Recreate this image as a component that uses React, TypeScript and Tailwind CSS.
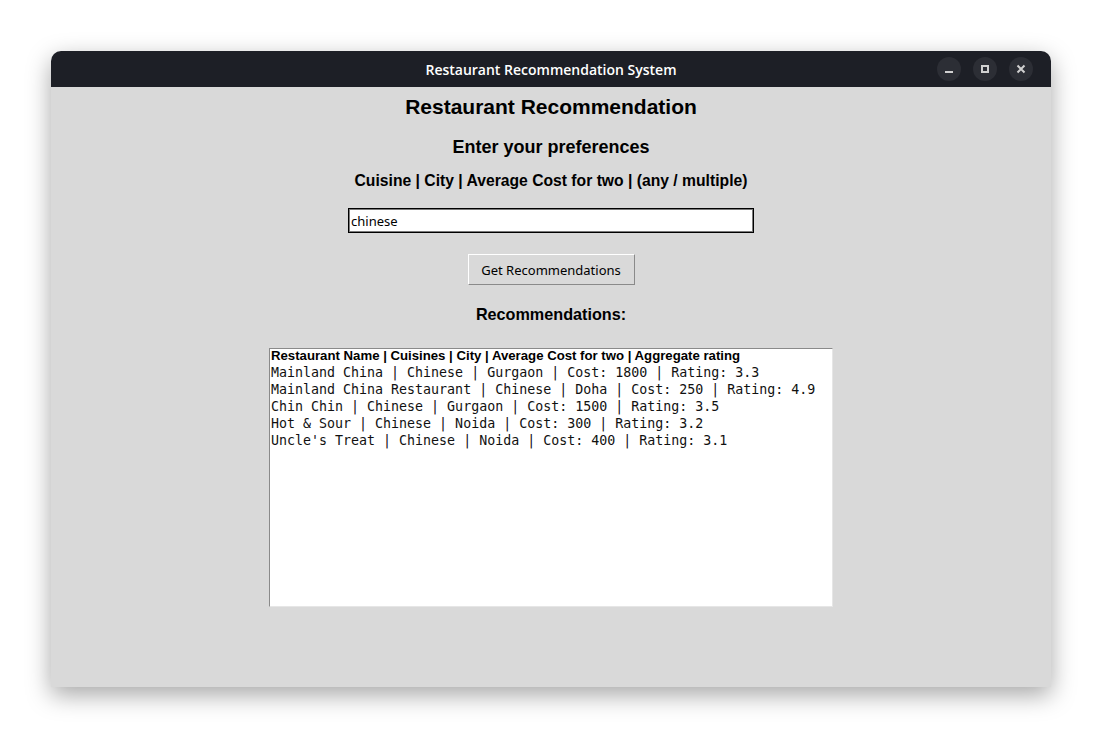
import React from "react";

const rows = [
  "Mainland China | Chinese | Gurgaon | Cost: 1800 | Rating: 3.3",
  "Mainland China Restaurant | Chinese | Doha | Cost: 250 | Rating: 4.9",
  "Chin Chin | Chinese | Gurgaon | Cost: 1500 | Rating: 3.5",
  "Hot & Sour | Chinese | Noida | Cost: 300 | Rating: 3.2",
  "Uncle's Treat | Chinese | Noida | Cost: 400 | Rating: 3.1",
];

export default function App() {
  return (
    <div className="w-[1102px] h-[738px] bg-white pt-[51px] pl-[51px]">
      <div className="w-[1000px] h-[636px] flex flex-col rounded-t-[10px] overflow-hidden shadow-[0_8px_24px_rgba(0,0,0,0.35)]">
        <div className="h-[36px] bg-[#1d1f26] flex items-center relative shrink-0">
          <div className="flex-1 text-center text-white text-[14px] font-semibold [font-family:'Open_Sans',sans-serif]">
            Restaurant Recommendation System
          </div>
          <div className="absolute right-[18px] top-[6px] flex gap-[12px]">
            <div className="w-[24px] h-[24px] rounded-full bg-[#2c2e35] flex items-center justify-center">
              <div className="w-[8px] h-[2px] bg-[#d0d0d0] mt-[5px]" />
            </div>
            <div className="w-[24px] h-[24px] rounded-full bg-[#2c2e35] flex items-center justify-center">
              <div className="w-[8px] h-[8px] border-[2px] border-[#d0d0d0]" />
            </div>
            <div className="w-[24px] h-[24px] rounded-full bg-[#2c2e35] flex items-center justify-center">
              <svg width="10" height="10" viewBox="0 0 10 10">
                <path d="M1.5 1.5 L8.5 8.5 M8.5 1.5 L1.5 8.5" stroke="#d0d0d0" strokeWidth="2" />
              </svg>
            </div>
          </div>
        </div>
        <div className="flex-1 bg-[#d9d9d9] flex flex-col items-center pt-[8px] text-black [font-family:'Liberation_Sans',Arial,sans-serif]">
          <div className="text-[21px] leading-[24px] font-bold">Restaurant Recommendation</div>
          <div className="mt-[18px] text-[18px] leading-[21px] font-bold">Enter your preferences</div>
          <div className="mt-[13px] text-[15.7px] leading-[19px] font-bold">
            Cuisine | City | Average Cost for two | (any / multiple)
          </div>
          <div className="mt-[18px] w-[406px] h-[25px] bg-white border border-black outline outline-1 outline-[#7a7a7a] -outline-offset-2 flex items-center pl-[2px] pt-[2px] text-[13px] [font-family:'Noto_Sans',sans-serif]">
            chinese
          </div>
          <div className="mt-[21px] w-[167px] h-[31px] bg-[#d9d9d9] border border-t-white border-l-white border-r-[#8a8a8a] border-b-[#8a8a8a] flex items-center justify-center pt-[2px] text-[13px] [font-family:'Noto_Sans',sans-serif]">
            Get Recommendations
          </div>
          <div className="mt-[19px] text-[16.2px] leading-[21px] font-bold">Recommendations:</div>
          <div className="mt-[23px] w-[564px] h-[259px] bg-white border border-t-[#8a8a8a] border-l-[#8a8a8a] border-r-[#e6e6e6] border-b-[#e6e6e6] pl-[1px]">
            <div className="text-[13.2px] leading-[14px] font-bold">
              Restaurant Name | Cuisines | City | Average Cost for two | Aggregate rating
            </div>
            <div className="mt-[1px]">
              {rows.map((r) => (
                <div key={r} className="text-[13.3px] leading-[17px] whitespace-pre text-[#111] [font-family:'DejaVu_Sans_Mono',monospace]">
                  {r}
                </div>
              ))}
            </div>
          </div>
        </div>
      </div>
    </div>
  );
}
